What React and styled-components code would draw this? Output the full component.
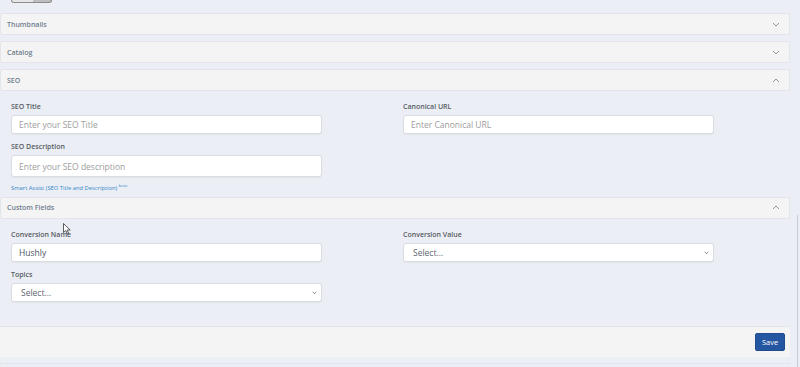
import React from 'react';
import styled, { createGlobalStyle } from 'styled-components';

const Global = createGlobalStyle`
  html, body {
    margin: 0;
    padding: 0;
    background: #eceef5;
    font-family: "Open Sans", "Liberation Sans", sans-serif;
  }
`;

const Page = styled.div`
  position: relative;
  display: flex;
  width: 800px;
  height: 367px;
  overflow: hidden;
`;

const Main = styled.div`
  width: 790px;
  display: flex;
  flex-direction: column;
`;

const Gutter = styled.div`
  flex: 1;
  display: flex;
  justify-content: flex-end;
  padding-right: 2px;
`;

const Rule = styled.div`
  margin-top: 215px;
  width: 1px;
  background: #c9cbd3;
`;

const Stub = styled.div`
  margin-left: 11px;
  width: 39px;
  height: 2px;
  border: 1px solid #8d8d8d;
  border-top: none;
  border-radius: 0 0 3px 3px;
  background: linear-gradient(90deg, #e6e6e6 55%, #bdbdbd 55%);
`;

const Header = styled.div`
  display: flex;
  align-items: center;
  justify-content: space-between;
  height: 20px;
  margin-top: ${p => p.$top}px;
  padding: 0 9px 0 6px;
  background: #f4f4f4;
  border: 1px solid #e4e5ea;
  border-radius: 2px;
  font-size: 7px;
  font-weight: 600;
  color: #6f7c8d;
`;

const Body = styled.div`
  display: grid;
  grid-template-columns: 311px 311px;
  column-gap: 81px;
  align-items: start;
  padding: ${p => p.$pad};
`;

const Field = styled.div`
  display: flex;
  flex-direction: column;
  margin-bottom: 8px;
`;

const Label = styled.label`
  height: 10px;
  line-height: 10px;
  margin-bottom: 3px;
  font-size: 7px;
  font-weight: 600;
  color: #555b63;
`;

const Input = styled.div`
  box-sizing: border-box;
  height: ${p => p.$h || 19}px;
  display: flex;
  align-items: center;
  justify-content: space-between;
  padding: 0 4px 0 7px;
  background: #fff;
  border: 1px solid #dcdde2;
  border-radius: 3px;
  box-shadow: 0 1px 1px rgba(0, 0, 0, 0.04);
  font-size: 8.5px;
  color: ${p => (p.$value ? '#4a5561' : '#9d9d9d')};
`;

const SelectText = styled.span`
  padding-left: 2px;
  color: #5e6670;
`;

const Link = styled.a`
  display: block;
  margin-top: -2px;
  margin-bottom: -1px;
  font-size: 5.8px;
  color: #2f86c6;
  text-decoration: none;
  sup {
    font-size: 4px;
  }
`;

const Footer = styled.div`
  display: flex;
  justify-content: flex-end;
  align-items: center;
  height: 30px;
  margin-top: 16px;
  padding-right: 5px;
  background: #f4f4f4;
  border-top: 1px solid #e3e4ea;
`;

const Save = styled.button`
  width: 30px;
  height: 18px;
  padding: 0;
  border: 1px solid #1f4c8f;
  border-radius: 2px;
  background: #2556a1;
  color: #fff;
  font-family: inherit;
  font-size: 7.5px;
`;

const Dotted = styled.div`
  margin-top: 6px;
  border-top: 1px dotted #dcdde3;
`;

const Cursor = styled.svg`
  position: absolute;
  left: 63px;
  top: 223px;
`;

const Chevron = ({ up, size = 8, color = '#8c95a4' }) => (
  <svg width={size} height={size / 2 + 1} viewBox="0 0 8 5">
    <path
      d={up ? 'M1 4 L4 1 L7 4' : 'M1 1 L4 4 L7 1'}
      fill="none"
      stroke={color}
      strokeWidth="1"
    />
  </svg>
);

const Section = ({ title, open, top }) => (
  <Header $top={top}>
    <span>{title}</span>
    <Chevron up={open} />
  </Header>
);

const Select = () => (
  <Input>
    <SelectText>Select...</SelectText>
    <Chevron size={5} color="#444" />
  </Input>
);

export default function App() {
  return (
    <Page>
      <Global />
      <Main>
        <Stub />
        <Section title="Thumbnails" top={10} />
        <Section title="Catalog" top={6} />
        <Section title="SEO" open top={6} />
        <Body $pad="11px 0 0 11px">
          <div>
            <Field>
              <Label>SEO Title</Label>
              <Input>Enter your SEO Title</Input>
            </Field>
            <Field>
              <Label>SEO Description</Label>
              <Input $h={22}>Enter your SEO description</Input>
            </Field>
            <Link>
              Smart Assist (SEO Title and Description) <sup>beta</sup>
            </Link>
          </div>
          <Field>
            <Label>Canonical URL</Label>
            <Input>Enter Canonical URL</Input>
          </Field>
        </Body>
        <Section title="Custom Fields" open top={6} />
        <Body $pad="11px 0 0 11px">
          <div>
            <Field>
              <Label>Conversion Name</Label>
              <Input $value>Hushly</Input>
            </Field>
            <Field>
              <Label>Topics</Label>
              <Select />
            </Field>
          </div>
          <Field>
            <Label>Conversion Value</Label>
            <Select />
          </Field>
        </Body>
        <Footer>
          <Save>Save</Save>
        </Footer>
        <Dotted />
      </Main>
      <Gutter>
        <Rule />
      </Gutter>
      <Cursor width="8" height="12" viewBox="0 0 8 12">
        <path d="M0.5 0.5 L0.5 9.5 L2.8 7.5 L4.3 11 L5.6 10.4 L4.2 7 L7.2 7 Z" fill="#fff" stroke="#333" strokeWidth="0.8" />
      </Cursor>
    </Page>
  );
}
